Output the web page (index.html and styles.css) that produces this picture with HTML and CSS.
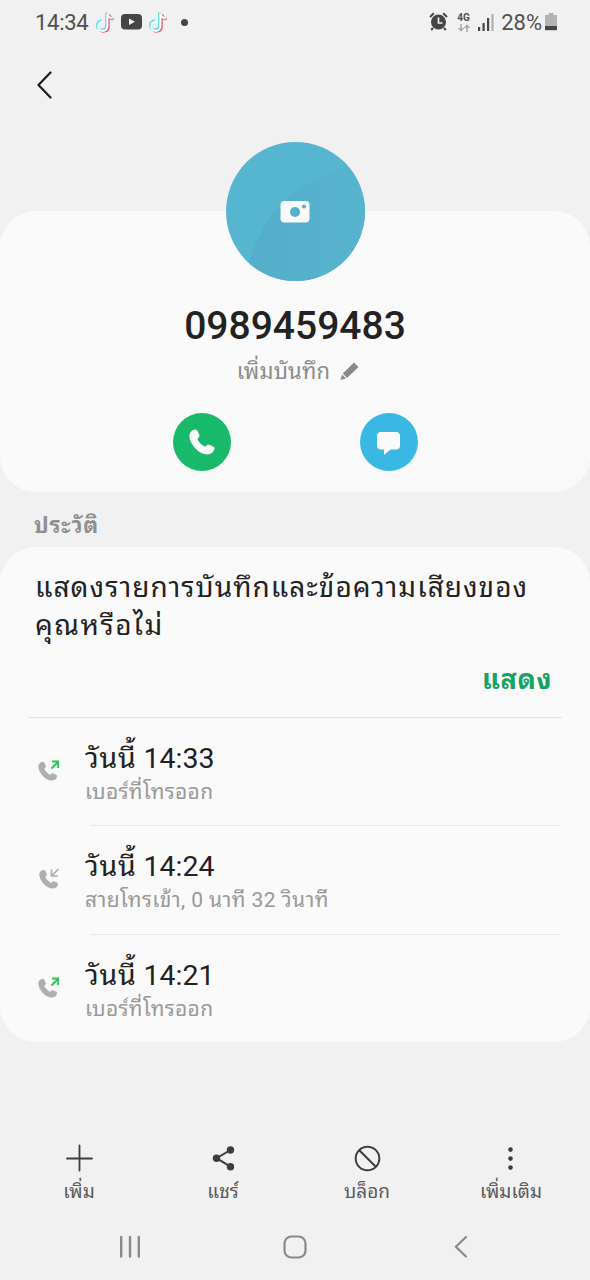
FILE: index.html
```html
<!DOCTYPE html>
<html lang="th">
<head>
<meta charset="utf-8">
<title>0989459483</title>
<link rel="stylesheet" href="styles.css">
</head>
<body>
<svg class="defs" width="0" height="0" aria-hidden="true">
  <symbol id="note" viewBox="0 0 20 22">
    <g fill="none" stroke-width="3">
      <path stroke="#5fe3e6" d="M11 1v13.500a4.800 4.800 0 1 1-4.800-4.800M11 2c.5 2.500 2.500 4 5 4.200"/>
      <path stroke="#ee5a78" d="M13 3v13.500a4.800 4.800 0 0 1-8 3M13.500 3.500c.5 2.500 2.500 4 5 4.200"/>
      <path stroke="#fff" stroke-width="2.200" d="M12 2v13.500a4.800 4.800 0 1 1-4.800-4.800M12 2.500c.5 2.500 2.500 4.200 5.600 4.400"/>
    </g>
  </symbol>
  <symbol id="phone" viewBox="0 0 24 24">
    <path d="M4.500.700Q7-.200 8 2L9.600 5.500Q10 7 8.500 8.200 7.500 9 8.200 10.300 10.500 14 14 16 15.300 16.600 16 15.500 17.200 14 18.700 14.500L22.300 16.200Q24 17 23.400 18.800 22 23.500 17 23.500 11 23.500 5 17 .5 11.500.3 6.500.5 2.200 4.500.700Z"/>
  </symbol>
</svg>

<header class="status">
  <span class="clock">14:34</span>
  <svg class="tiktok" width="19" height="22"><use href="#note"/></svg>
  <svg class="youtube" width="21" height="16" viewBox="0 0 21 16"><rect width="21" height="15.500" rx="4" fill="#454545"/><path d="M8 4.500v6.500l6-3.200z" fill="#f1f1f1"/></svg>
  <svg class="tiktok second" width="19" height="22"><use href="#note"/></svg>
  <i class="dot"></i>
  <div class="status-right">
    <svg width="19" height="20" viewBox="0 0 19 20">
      <circle cx="9.500" cy="10" r="7.500" fill="#454545"/>
      <path d="M1 5l3.800-3.800M18 5l-3.800-3.800M4 16l-1.800 2M15 16l1.800 2" stroke="#454545" stroke-width="2"/>
      <path d="M9.500 5.500V11h4" fill="none" stroke="#f1f1f1" stroke-width="1.700"/>
    </svg>
    <div class="network"><b>4G</b>
      <svg width="12" height="8" viewBox="0 0 12 8" fill="none" stroke="#a9a9a9" stroke-width="1.500"><path d="M3 0v6.500M.5 4 3 6.700 5.500 4M9 8V1.500M6.500 4 9 1.300 11.500 4"/></svg>
    </div>
    <svg class="signal" width="16" height="17" viewBox="0 0 16 17"><path d="M0 13h2.200v4H0zM4.500 9h2.200v8H4.500zM9 4h2.200v13H9z" fill="#454545"/><path d="M13.500 0h2v17h-2z" fill="#aaa"/></svg>
    <span class="percent">28%</span>
    <svg class="battery" width="12" height="18" viewBox="0 0 12 18"><path d="M3.500 0h5v2H12v11H0V2h3.500z" fill="#b3b3b3"/><path d="M0 13h12v4.200H0z" fill="#454545"/></svg>
  </div>
</header>

<div class="topbar">
  <svg width="16" height="28" viewBox="0 0 16 28"><path d="M13.500 1.500 1.500 14l12 12.500" fill="none" stroke="#1d1d1d" stroke-width="2.200" stroke-linecap="round" stroke-linejoin="round"/></svg>
</div>

<section class="card profile">
  <svg class="avatar" width="140" height="140" viewBox="0 0 140 140">
    <defs>
      <clipPath id="round"><circle cx="70.500" cy="69.500" r="69.500"/></clipPath>
      <linearGradient id="shade" gradientUnits="userSpaceOnUse" x1="20" y1="0" x2="140" y2="0"><stop offset="0" stop-color="#54adca"/><stop offset="1" stop-color="#57b4ce"/></linearGradient>
    </defs>
    <g clip-path="url(#round)">
      <rect width="140" height="140" fill="#57b6cf"/>
      <circle cx="148" cy="150" r="127" fill="url(#shade)"/>
    </g>
    <rect x="55.500" y="59" width="29" height="21.500" rx="4" fill="#fafafa"/>
    <circle cx="70" cy="70" r="5" fill="#54b1cc"/><circle cx="79" cy="64.500" r="2.100" fill="#54b1cc"/>
  </svg>
  <h1 class="number">0989459483</h1>
  <div class="memo"><span>เพิ่มบันทึก</span>
    <svg width="19" height="19" viewBox="0 0 19 19" fill="#8a8a8a"><path d="M14 .500 18.500 5 7 16 2.800 11.500zM2 12.500 6 16.600.500 18z"/></svg>
  </div>
  <div class="actions">
    <span class="action call"><svg width="26" height="26" fill="#fafafa"><use href="#phone"/></svg></span>
    <span class="action message"><svg width="23" height="23" viewBox="0 0 23 23" fill="#fafafa"><path d="M4 0h15q4 0 4 4v9.500q0 4-4 4h-5.500L7 23v-5.500H4q-4 0-4-4V4q0-4 4-4z"/></svg></span>
  </div>
</section>

<h2 class="section-title"><span>ประวัติ</span></h2>

<section class="card history">
  <div class="prompt">
    <p><span class="line1">แสดงรายการบันทึกและข้อความเสียงของ</span><br><span class="line2">คุณหรือไม่</span></p>
    <div class="show"><span>แสดง</span></div>
  </div>
  <div class="entry">
    <svg class="type" width="22" height="22" viewBox="0 0 22 22"><use href="#phone" x="1" y="1.500" width="19.500" height="19.500" fill="#adafb0"/><path d="M14.500 8.500 21 2M15 1.500h6.200V8" fill="none" stroke="#2bc455" stroke-width="1.900"/></svg>
    <div class="info"><div class="when"><span class="day">วันนี้</span> 14:33</div><div class="detail out">เบอร์ที่โทรออก</div></div>
  </div>
  <div class="entry">
    <svg class="type" width="22" height="22" viewBox="0 0 22 22"><use href="#phone" x="2" y="1.500" width="19.500" height="19.500" fill="#adafb0"/><path d="M21.500 1 15 7.500M14.500 1.500V8h6.500" fill="none" stroke="#adafb0" stroke-width="1.600"/></svg>
    <div class="info"><div class="when"><span class="day">วันนี้</span> 14:24</div><div class="detail in">สายโทรเข้า, 0 นาที 32 วินาที</div></div>
  </div>
  <div class="entry">
    <svg class="type" width="22" height="22" viewBox="0 0 22 22"><use href="#phone" x="1" y="1.500" width="19.500" height="19.500" fill="#adafb0"/><path d="M14.500 8.500 21 2M15 1.500h6.200V8" fill="none" stroke="#2bc455" stroke-width="1.900"/></svg>
    <div class="info"><div class="when"><span class="day">วันนี้</span> 14:21</div><div class="detail out">เบอร์ที่โทรออก</div></div>
  </div>
</section>

<footer class="toolbar">
  <div class="tool"><svg width="28" height="28" viewBox="0 0 28 28" stroke="#3d3d3d" stroke-width="1.800" stroke-linecap="round"><path d="M14.500 1.500v25M2 14.500h25"/></svg><span>เพิ่ม</span></div>
  <div class="tool"><svg width="28" height="28" viewBox="0 0 28 28" fill="#3d3d3d"><path d="M21.500 6 7.500 14.200 21.500 22.700" fill="none" stroke="#3d3d3d" stroke-width="2"/><circle cx="21.500" cy="6" r="3.700"/><circle cx="7.500" cy="14.200" r="3.700"/><circle cx="21.500" cy="22.700" r="3.700"/></svg><span>แชร์</span></div>
  <div class="tool"><svg width="28" height="28" viewBox="0 0 28 28" fill="none" stroke="#3d3d3d" stroke-width="2"><circle cx="14.500" cy="14.500" r="11.800"/><path d="m6.300 6.200 16.500 16.500"/></svg><span>บล็อก</span></div>
  <div class="tool"><svg width="28" height="28" viewBox="0 0 28 28" fill="#3d3d3d"><circle cx="13.500" cy="5.600" r="2.300"/><circle cx="13.500" cy="14.600" r="2.300"/><circle cx="13.500" cy="23.600" r="2.300"/></svg><span>เพิ่มเติม</span></div>
</footer>

<nav class="navbar">
  <svg width="22" height="24" viewBox="0 0 22 24" stroke="#8a8a8a" stroke-width="2.400" stroke-linecap="round"><path d="M2.200 2v19.500M11 2v19.500M19.800 2v19.500"/></svg>
  <svg width="24" height="24" viewBox="0 0 24 24" fill="none" stroke="#8a8a8a" stroke-width="2.200"><rect x="1.500" y="1.500" width="21" height="21" rx="7"/></svg>
  <svg class="back" width="14" height="24" viewBox="0 0 14 24" fill="none" stroke="#8a8a8a" stroke-width="2.200" stroke-linecap="round" stroke-linejoin="round"><path d="M12 2 1.800 11.800 12 21.500"/></svg>
</nav>
</body>
</html>
```
FILE: styles.css
```css
* { box-sizing: border-box; }
body {
  margin: 0;
  width: 590px;
  height: 1280px;
  overflow: hidden;
  display: flex;
  flex-direction: column;
  background: #f1f1f1;
  color: #222;
  font-family: Roboto, Waree, "Noto Sans Thai Looped", Loma, Garuda, "Noto Sans Thai", "Noto Sans", sans-serif;
}
svg { display: block; flex: none; }
h1, h2, p { margin: 0; }
.defs { position: absolute; }

.status {
  height: 46px;
  padding: 0 33px 2px 35px;
  display: flex;
  align-items: center;
  color: #505050;
  font-size: 22px;
}
.clock { width: 61px; letter-spacing: -0.3px; }
.youtube { margin: 0 7px 0 6px; }
.dot { width: 7px; height: 7px; border-radius: 50%; background: #454545; margin-left: 13px; }
.status-right { margin-left: auto; display: flex; align-items: center; }
.network { width: 14px; margin: 0 7px 0 9px; font-size: 10px; line-height: 10px; }
.network svg { margin: 1px 0 0 1px; }
.percent { margin: 0 3px 0 7px; }

.topbar { height: 165px; padding: 25px 37px; }

.card { background: #fafafa; border-radius: 36px; }
.profile { height: 281px; display: flex; flex-direction: column; align-items: center; }
.avatar { margin-top: -69px; }
.number { margin-top: 20px; font-size: 39px; line-height: 48px; font-weight: 500; }
.memo {
  height: 32px;
  margin-top: 6px;
  padding-left: 6px;
  display: flex;
  align-items: center;
  gap: 10px;
  color: #8c8c8c;
  font-size: 22px;
  line-height: 34px;
  letter-spacing: 0.2px;
}
.memo svg { margin-top: -2px; }
.actions { margin-top: 25px; display: flex; gap: 129px; }
.action { width: 58px; height: 58px; border-radius: 50%; display: flex; align-items: center; justify-content: center; }
.call { background: #19b96b; }
.message { background: #38b8e2; }
.message svg { margin-top: 3px; }

.section-title { height: 55px; padding: 18px 34px 0; font-size: 22px; line-height: 32px; letter-spacing: 0.8px; color: #8f8f8f; }

.history { height: 495px; }
.prompt { height: 171px; margin: 0 28px; padding: 22px 7px 0; border-bottom: 1px solid #e2e2e2; }
.prompt p { font-size: 28px; line-height: 38px; white-space: nowrap; }
.line1 { letter-spacing: 1.05px; }
.line2 { letter-spacing: 1.5px; }
.show { margin-top: 15px; padding-right: 3px; text-align: right; color: #16a362; font-size: 27px; line-height: 40px; font-weight: 700; letter-spacing: 0.6px; }
.entry { height: 108.400px; display: flex; padding-left: 37px; }
.type { margin: 42px 26px 0 0; }
.info { flex: 1; margin-right: 29px; padding-top: 22px; background: linear-gradient(#e6e6e6, #e6e6e6) 5px 100% / 100% 1px no-repeat; }
.entry:last-child .info { background: none; }
.when { font-size: 28.500px; line-height: 38px; }
.day { letter-spacing: 0.7px; }
.detail { font-size: 21px; line-height: 28px; color: #999; }
.out { letter-spacing: 0.35px; }
.in { letter-spacing: 0.4px; }

.toolbar { margin-top: 102px; padding: 0 7px; display: grid; grid-template-columns: repeat(4, 144px); }
.tool { display: flex; flex-direction: column; align-items: center; font-size: 19px; line-height: 30px; letter-spacing: 0; color: #5c5c5c; }
.tool span { margin-top: 5px; }

.navbar { margin-top: 28px; padding: 0 120px 0 119px; display: grid; grid-template-columns: 1fr 24px 1fr; }
.back { justify-self: end; margin-right: 2px; }
```
